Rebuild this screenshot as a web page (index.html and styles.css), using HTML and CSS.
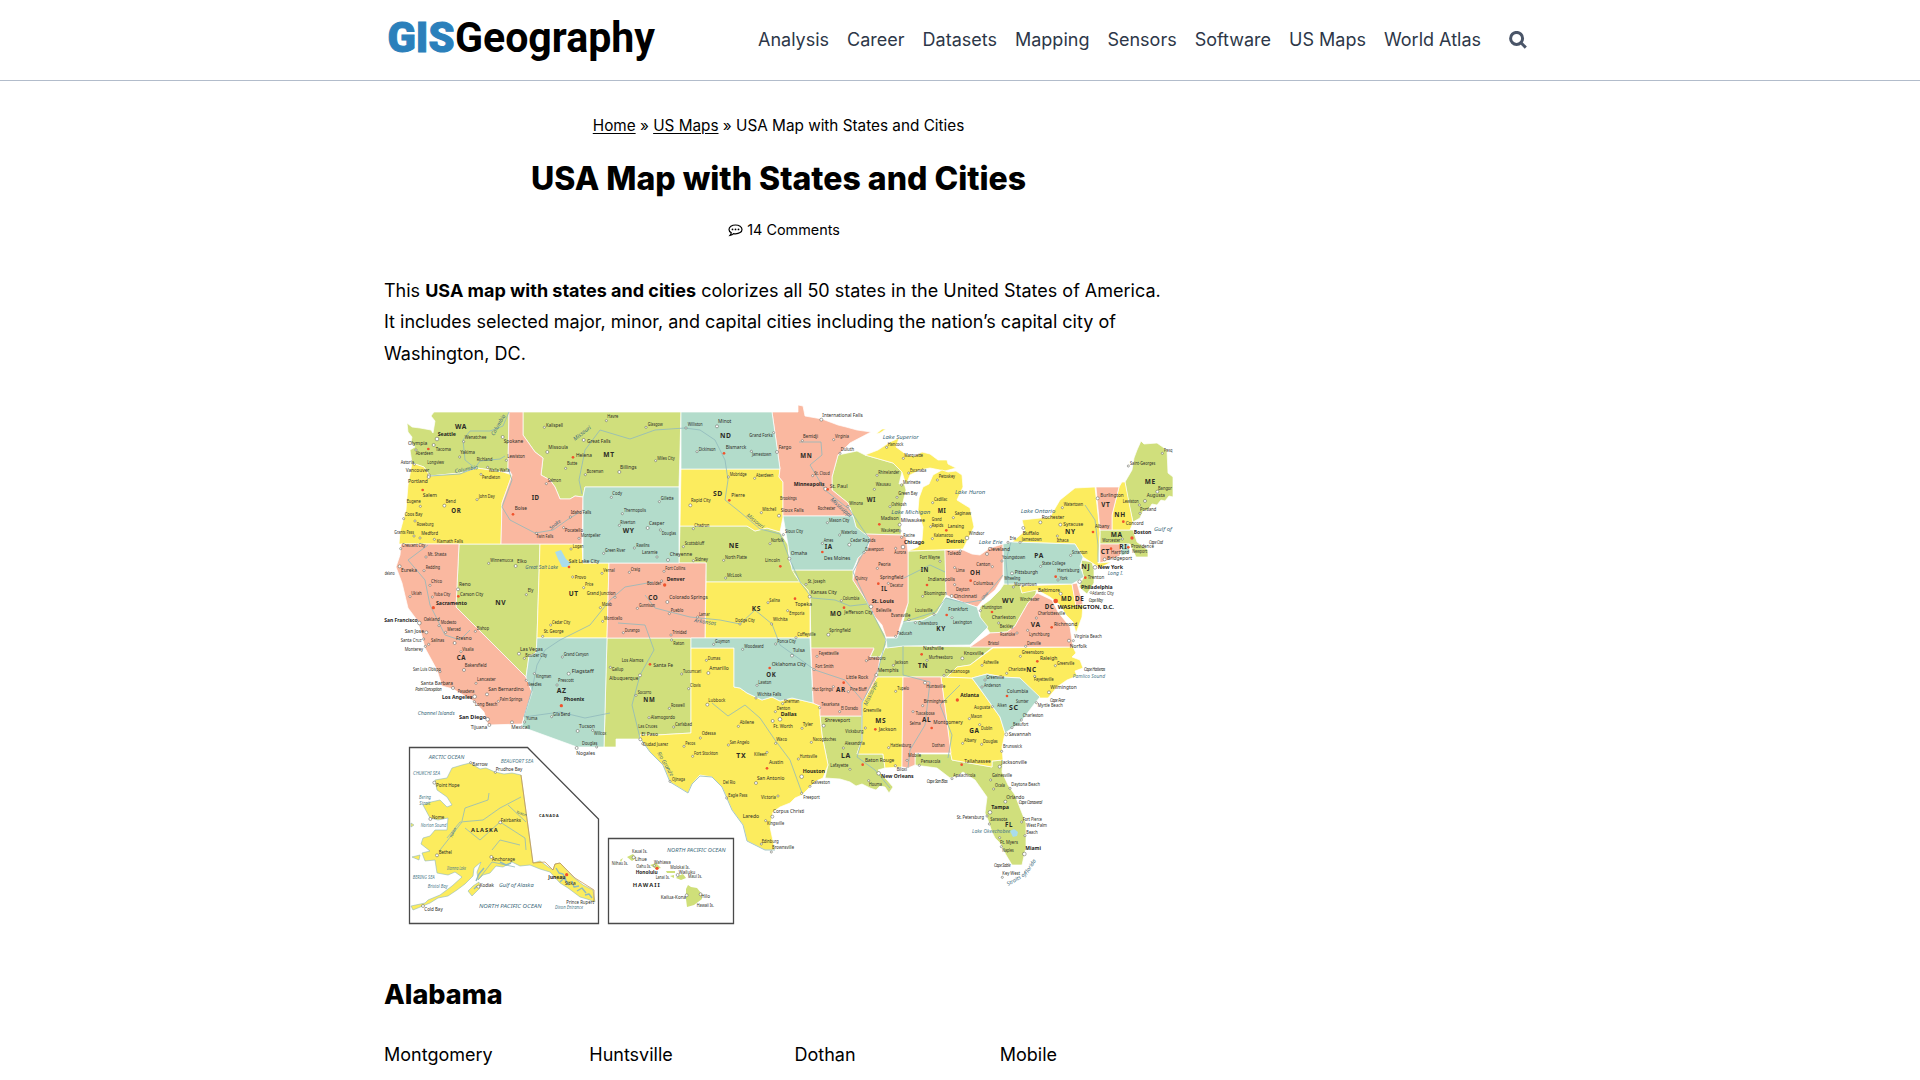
FILE: index.html
```html
<!DOCTYPE html>
<html lang="en">
<head>
<meta charset="utf-8">
<title>USA Map with States and Cities - GIS Geography</title>
<link rel="stylesheet" href="styles.css">
</head>
<body>
<header class="site-header">
  <div class="header-inner">
    <a class="logo" aria-label="GISGeography">
      <svg width="276" height="80" viewBox="0 0 276 80">
        <text class="logo-gis" x="3.500" y="52" textLength="67" lengthAdjust="spacingAndGlyphs">GIS</text>
        <text class="logo-geo" x="71" y="51.5" textLength="200" lengthAdjust="spacingAndGlyphs">Geography</text>
      </svg>
    </a>
    <nav class="nav">
      <a>Analysis</a><a>Career</a><a>Datasets</a><a>Mapping</a><a>Sensors</a><a>Software</a><a>US Maps</a><a>World Atlas</a>
    </nav>
    <svg class="search" width="18" height="18" viewBox="0 0 18 18"><circle cx="7.6" cy="7.4" r="6"/><path d="M12 11.800l4.800 4.800"/></svg>
  </div>
</header>
<main class="content">
  <article class="article">
    <div class="breadcrumb"><a>Home</a> » <a>US Maps</a> » USA Map with States and Cities</div>
    <h1>USA Map with States and Cities</h1>
    <div class="meta">
      <svg width="15" height="13" viewBox="0 0 15 13"><path d="M7.5 1C3.9 1 1 2.9 1 5.4c0 1.400.9 2.600 2.300 3.400-.1.900-.6 1.800-1.300 2.600 1.500-.2 2.700-.8 3.600-1.800.6.1 1.200.2 1.900.2 3.600 0 6.500-1.900 6.500-4.400S11.100 1 7.500 1z"/><circle cx="4.500" cy="5.400" r=".9"/><circle cx="7.500" cy="5.400" r=".9"/><circle cx="10.500" cy="5.400" r=".9"/></svg>
      <span>14 Comments</span>
    </div>
    <p class="intro">This <strong>USA map with states and cities</strong> colorizes all 50 states in the United States of America. It includes selected major, minor, and capital cities including the nation’s capital city of Washington, DC.</p>
    <svg class="map" width="789" height="530" viewBox="384 400 789 530">
      <g class="states">
        <g class="green">
          <path d="M407 423L412 427 420 428 431 430 433 433 435 421 431 416 434 412H509L508 470 503 472 477 468 460 473 440 475 430 476 424 467 412 463 410 450 415 447 411 442 412 437 408 432z"/>
          <path d="M523 412H681L679 487H585L583 497 575 496 570 499 560 499 555 487 550 480 541 475 543 458 535 452 523 435z"/>
          <path d="M459 544H540L537 638 536 653 529 656 526 677 456 607z"/>
          <path d="M607 638H691L691 733 657 735 640 735 640 739H616V747H604z"/>
          <path d="M680 526H747L755 531 767 528 780 532 788 545 789 560 795 575 800 582H706V563H679z"/>
          <path d="M792 570H853L853 580 867 602 875 617 885 635 886 645 880 657H870L874 649H811L810 598 800 582z"/>
          <path d="M832 477L838 455 857 451 865 455 893 463 902 472 899 484 904 483 906 490 901 510 901 535 863 534 856 527 853 516 848 503 832 490z"/>
          <path d="M908 551L945 550 946 595 937 613 923 620 903 622 908 603z"/>
          <path d="M885 648L903 646 993 647 970 665 957 667 947 677H877L880 660z"/>
          <path d="M820 716H862L862 740 857 754H883L885 768 878 770 884 777 887 780 893 787 889 793 885 787 880 786 876 790 870 788 862 784 856 786 850 782 840 779 825 778 828 765 822 735z"/>
          <path d="M915 754H951L952 760 992 767 992 761 1003 760 1002 772 1008 785 1015 795 1020 808 1026 823V847L1022 865 1012 865 1006 855 1000 843 995 838 992 832 988 820 985 813 987 797 975 780 963 772 957 776 950 778 937 768 915 765z"/>
          <path d="M1004 584H1020L1022 593 1037 588 1035 597 1028 603 1020 617 1015 626 1007 632 990 633 980 617 980 607 990 600 1000 590z"/>
          <path d="M1081 560L1092 562 1094 570 1094 583 1087 594 1079 587 1083 578z"/>
          <path d="M1100 530H1133L1137 542 1148 550 1148 557 1136 557 1130 544H1100z"/>
          <path d="M1125 482L1132 470 1134 458 1137 450 1141 441 1144 444 1157 443 1167 450 1168 473 1173 477V497L1169 496 1165 501 1161 500 1157 505 1152 504 1148 510 1143 511 1140 518 1133 522 1128 500z"/>
        </g>
        <g class="yellow">
          <path d="M412 463L424 467 430 476 440 475 460 473 477 468 503 472 512 475 502 503 501 544H399L400 532 406 510 408 485z"/>
          <path d="M540 544H582L583 563H609L607 638H537z"/>
          <path d="M681 469H780L779 477 783 482V517L780 532 767 528 755 531 747 526H680z"/>
          <path d="M706 582H800L808 590 810 598V638H705z"/>
          <path d="M691 648H734V687L740 688 747 693 762 700 772 697 780 701 792 698 813 703 820 706V716L822 735 828 765 823 778 816 781 810 787 802 795 795 798 790 803 780 807 773 812 770 827 775 850 765 850 747 841 743 825 732 810 722 787 712 777 700 775 692 784 688 793 670 782 663 765 650 752 640 738V735L657 735 691 733z"/>
          <path d="M865 455L878 450 890 442 899 438 896 447 907 455 915 456 922 452 930 454 938 460 947 460 948 464 956 468 945 471 930 468 920 470 910 475 906 485 902 472 893 463z"/>
          <path d="M876 434L882 429 886 429 880 433z"/>
          <path d="M942 470L948 472 956 471 962 475 963 487 957 500 965 505 970 508 974 527 970 535 963 549 908 551 918 547 922 540 923 527 918 510 919 498 923 487 929 484 933 475z"/>
          <path d="M877 677H903L902 767 885 768 883 754H857L862 740 862 703z"/>
          <path d="M941 677L972 678 983 693 1000 717 1005 733 1002 747 1003 760 992 761V767L952 760 950 750 948 730z"/>
          <path d="M993 648L1073 647 1076 653 1072 657 1080 660 1083 668 1075 671 1077 676 1067 680 1057 687 1048 698 1040 698 1020 678 1003 677 987 674 972 678 947 677 957 667 970 665z"/>
          <path d="M1020 586L1072 584 1076 605 1083 604 1082 617 1076 633 1073 622 1066 615 1060 605 1050 597 1037 590 1022 593z"/>
          <path d="M1012 542L1025 531 1022 520 1050 517 1060 500 1075 488 1095 487 1100 533 1098 563 1111 562 1100 568 1083 557 1075 544z"/>
          <path d="M1119 487L1122 482 1125 482 1133 523 1130 530H1112L1112 515z"/>
          <path class="alaska" d="M452 768L462 765 470 763 480 769 486 768 495 772 504 774 512 773 521 775 533 863 540 861 547 866 553 870 555 864 560 863 573 877 583 885 593 890 595 902 587 899 580 897 568 888 560 883 550 872 540 869 530 865 520 866 512 862 503 867 496 866 490 873 483 875 478 880 477 872 481 862 474 868 473 876 465 884 457 890 448 896 438 898 430 903 413 910 411 906 425 903 428 900 440 895 452 886 462 877 455 872 448 875 437 873 435 860 425 861 422 853 430 851 421 844 423 838 430 836 435 830 447 830 448 818 438 820 430 818 423 805 431 802 440 800 447 807 452 805 447 797 437 790 435 780 447 778z"/>
          <path class="alaska" d="M468 891L473 886 479 882 480 888 472 896zM412 857L420 855 419 860zM411 823l3 2-3 2z"/>
        </g>
        <g class="coral">
          <path d="M509 412H523V435L535 452 543 458 541 475 550 480 555 487 560 499 570 499 575 496 583 497 582 544H501L502 503 512 475 508 468z"/>
          <path d="M401 544H459L456 607 526 677 532 692 524 717 522 724 488 725 484 712 475 702 453 689 442 686 437 670 425 648 421 632 417 620 408 608 402 583 396 567 400 555z"/>
          <path d="M609 563H706L705 638H607z"/>
          <path d="M772 412H798V405L803 406 805 416 822 419 838 425 846 427 857 430 871 432 850 443 838 455 832 477V490L848 503 853 516H783V482L779 477 780 469z"/>
          <path d="M863 534L901 535 906 537 908 552V603L902 620 897 637H886L882 625 875 617 867 602 853 580 858 558 867 550 870 540z"/>
          <path d="M945 550H963L972 554 980 555 990 548 1003 544V577L995 590 983 600 977 607 962 602 946 595z"/>
          <path d="M811 648H874L870 657H880L877 677 862 703V716H820V706L813 703z"/>
          <path d="M903 677H941L948 730 951 753H915V765L908 768 902 767z"/>
          <path d="M970 647L990 633 1007 632 1015 626 1020 617 1028 603 1037 593 1052 600 1058 612 1070 627 1073 647z"/>
          <path d="M1072 584L1077 583 1083 604 1076 606z"/>
          <path d="M1096 487H1119L1112 515V530H1100z"/>
          <path d="M1100 544H1122L1120 556 1100 563z"/>
        </g>
        <g class="teal">
          <path d="M585 487H679V563H583V497z"/>
          <path d="M681 412H772L776 440 780 469H681z"/>
          <path d="M783 516H853L856 527 870 538 867 550 858 558 853 570H792L788 545z"/>
          <path d="M691 638H810L813 703 792 698 780 701 772 697 762 700 747 693 740 688 734 687V648H691z"/>
          <path d="M537 638H607L604 747H577L522 727 524 717 532 692 526 677 529 656 536 653z"/>
          <path d="M946 597L962 602 977 607 980 617 988 627 970 645 903 646 887 648 886 638H897L903 622 923 620 937 613z"/>
          <path d="M972 678L987 674 1003 677 1020 678 1040 697 1035 703 1020 723 1005 733 1000 717 983 693z"/>
          <path d="M1003 544L1012 542 1075 544 1083 557 1080 566 1084 577 1072 584H1004z"/>
          <path d="M1122 544H1129L1130 553 1121 556z"/>
        </g>
      </g>
      <g class="rivers">
        <path d="M430 476L460 474 475 468 480 461 500 459 505 456M475 468L465 460 463 440 470 431 490 431 503 426 509 412M508 468L512 480 502 507 510 520 535 533 553 530 567 520 583 510M582 494L579 480 585 450 600 430 630 439 655 430 685 428 700 430 715 440 725 460 728 480 725 500 740 512 760 529 780 534 790 560 800 582 812 598 835 600 850 606 867 604M653 582L625 587 610 600 590 625 560 640 545 650 537 665 532 690 524 717 560 712 585 718 610 713M618 623L645 625 654 650 640 675 632 705 640 738 650 752 663 765 670 782 688 793 692 784 700 776 712 777 722 787 732 810 743 825 747 841 765 850 775 850M645 595L655 608 690 617 720 620 740 624 755 610 772 624 780 645 815 670 845 680 862 700M712 703L728 716 745 705 760 718 775 740 790 760 802 793M799 442L821 442 822 455 810 465 825 490 850 510 870 540 853 572 867 602 886 640 878 670 862 703 862 740 857 757 875 770 890 788M903 622L935 612 946 598 965 603 982 600 1003 575M903 646L903 675 930 682 925 725 910 750 908 768M904 578L930 565 945 572M428 545L408 560 425 580 430 605 445 635 460 640 470 630M948 758L952 735 940 705 960 685M1011 542L1006 560 1008 585M1085 505L1095 520 1098 545 1098 562"/>
        <path d="M447 838L460 822 483 820 500 808 521 797M462 821L465 808 488 800 489 793M508 805L526 822M462 822L440 850M465 828L480 840 500 822 525 838 526 850M492 850L500 840 520 845M478 880L492 862 515 867"/>
        <path class="sounds" d="M556 868l3 5 4 1 3 6M560 882l4-4 5 7M572 881l2 6 5-1M577 891l5-3 4 5M585 895l4-1 3 4M484 868l-5 6-3 7M500 862l6 3 5-2M474 889l3-3"/>
      </g>
      <path class="lake" d="M555 552l6-2 5 9 5 4-4 4-5 0-4-8zM1010 831l4-2 4 3-1 4-4 1z"/>
      <path class="ak-border" d="M521 775L533 863 545 862 553 870 555 864 560 863 575 878 594 890V902"/>
      <path class="islands" d="M627 857l6-3 3 4-4 3zM620 860l3-2-2 4zM650 865l6-2 5 5-5 1zM666 871h9v2h-8zM678 876l5-2 3 4-5 2-5-2zM670 876l4-1v3zM686 889l2-4 3 2 6 1 4 5 1 6-8 6-7 2-1-8z"/>
      <path class="frame" d="M409.500 747.500H527.500L598.500 819V923.500H409.500zM608.500 838.500H733.500V923.500H608.500z"/>
      <g id="labels"></g>
    </svg>
    <h2>Alabama</h2>
    <div class="cities"><span>Montgomery</span><span>Huntsville</span><span>Dothan</span><span>Mobile</span></div>
  </article>
</main>
<script src="map.js"></script>
</body>
</html>
```

FILE: styles.css
```css
* { box-sizing: border-box; }
body { margin: 0; height: 1080px; overflow: hidden; background: #fff; color: #000; font-family: Inter, "Liberation Sans", sans-serif; font-size: 18px; line-height: 31.4px; }
.site-header { height: 81px; border-bottom: 1px solid #b2bccb; }
.header-inner { width: 1152px; height: 80px; margin: 0 auto; display: flex; align-items: center; }
.logo { display: flex; margin-right: auto; }
.logo-gis { font: 900 42.5px Roboto, sans-serif; fill: #2b80bb; stroke: #2b80bb; stroke-width: 1; }
.logo-geo { font: 700 42px Roboto, sans-serif; fill: #000; }
.nav { display: flex; gap: 18px; color: #2d3748; }
.search { margin: 0 9px 0 28px; fill: none; stroke: #4a5568; stroke-width: 3; }
.content { width: 1152px; margin: 0 auto; }
.article { width: 789px; padding-top: 32px; }
.breadcrumb { text-align: center; font-size: 15.300px; line-height: 26px; }
.breadcrumb a { text-decoration: underline; text-underline-offset: 2px; }
h1 { margin: 18px 0 0; text-align: center; font-size: 32px; font-weight: 800; line-height: 44px; }
.meta { display: flex; justify-content: center; align-items: center; gap: 4px; margin-top: 17px; padding-left: 11px; height: 24px; font-size: 14.400px; line-height: 24px; }
.meta path { fill: none; stroke: #000; stroke-width: 1.200; }
.intro { margin: 33px 0 0; height: 95px; }
.map { display: block; margin-top: 30px; }
h2 { margin: 44px 0 0; font-size: 27px; font-weight: 800; line-height: 42px; }
.cities { display: grid; grid-template-columns: repeat(4, 1fr); column-gap: 32px; margin-top: 23px; }

.states path { stroke: #fff; stroke-opacity: .7; stroke-width: 1; stroke-linejoin: round; }
.states .alaska { stroke: #8fb9bd; stroke-opacity: 1; stroke-width: .6; }
.green { fill: #d0df7c; }
.yellow { fill: #fcec5e; }
.coral { fill: #fab8a0; }
.teal { fill: #b3dccb; }
.rivers { fill: none; stroke: #8fb9bd; stroke-width: .8; stroke-linejoin: round; }
.rivers .sounds { stroke-width: 1.400; }
.lake { fill: #a9dcec; }
.islands { fill: #cfdf79; }
.ak-border { fill: none; stroke: #c98e3c; stroke-width: .7; }
.frame { fill: none; stroke: #4a4a4a; stroke-width: 1.300; }
#labels { font-family: "Noto Sans", sans-serif; fill: #2b2b26; }
.s { font-size: 14px; }
.m { font-size: 16.500px; }
.b { font-size: 17px; font-weight: 700; fill: #1d1d1d; }
.st { font-size: 21px; font-weight: 700; letter-spacing: 2px; }
.ak { font-size: 17px; font-weight: 700; letter-spacing: 3px; }
.ca { font-size: 12px; font-weight: 700; letter-spacing: 2px; }
.w { font-size: 18px; font-style: italic; fill: #406b7c; }
.ws { font-size: 14px; font-style: italic; fill: #4f7c8c; }
.c { font-size: 14px; font-style: italic; letter-spacing: -1px; }
.dot { fill: #fff; stroke: #55584f; stroke-width: 1.500; }
.cap { fill: #f0532d; }
```

FILE: map.js
```js
// Labels are grouped in regional sheets drawn at three units per map pixel.
// Row: class, text, left, middle, width [, dot x, dot y [, capital]]
const sheets = [
  [380, 400, `
st|WA|225|79|36
b|Seattle|173|102|55|171|117
m|Olympia|84|131|58|145|147|1
m|Tacoma|167|147|46|161|135
s|Aberdeen|107|161|52|108|150
s|Wenatchee|254|111|65|251|125
s|Yakima|241|158|44|239|171
s|Richland|290|179|47
s|Longview|142|188|50
s|Astoria|62|187|40|103|193
m|Spokane|371|125|59|368|111
s|Lewiston|382|168|53|379|181
m|Vancouver|77|211|71|147|226
s|Walla Walla|326|211|63|323|202
s|Pendleton|306|233|54|303|223
m|Portland|84|243|59|146|231
m|Salem|128|285|43|128|270|1
s|Eugene|80|305|42|121|319
m|Bend|197|303|30|193|317
s|John Day|296|289|48|291|299
st|OR|214|331|30
s|Coos Bay|74|343|53|71|356
s|Roseburg|110|372|51|105|363
s|Grants Pass|43|397|59|102|408
s|Medford|124|401|50|120|414
s|Klamath Falls|170|424|79|163|418
s|Crescent City|66|436|70|62|446
st|ID|455|292|24
m|Boise|404|326|37|399|343|1
s|Idaho Falls|572|337|62|571|351
s|Pocatello|554|391|55|551|383
s|Twin Falls|469|410|51|469|400
s|Salmon|503|242|40|499|251
s|Kalispell|498|76|51|493|82
m|Missoula|505|141|59|502|156
m|Helena|588|165|48|579|172|1
s|Butte|561|191|31|557|205
s|Montpelier|602|405|60|597|415
s|Mt. Shasta|143|462|56|138|471
s|Redding|137|503|43|132|512
m|Eureka|63|512|48|59|499
s|Winnemucca|331|481|68|326|490
m|Elko|411|483|29|407|498
s|Logan|578|438|33|573|447
m|Salt Lake City|566|483|92|567|501|1
s|Provo|584|532|34|578|531
w|Great Salt Lake|436|503|98
s|delano|14|521|30
`],
  [580, 400, `
s|Havre|82|48|33|79|62
s|Glasgow|203|73|45|198|82
m|Great Falls|21|124|71|11|120
st|MT|70|165|34
m|Billings|120|202|50|118|216
s|Miles City|232|174|52|227|182
s|Bozeman|20|214|50|16|224
s|Williston|323|74|45|318|84
m|Minot|414|65|40|411|79
st|ND|420|108|35
s|Grand Forks|508|107|70|581|98
m|Bismarck|437|142|62|432|160|1
s|Dickinson|356|147|51|351|155
s|Jamestown|516|164|58|514|154
s|Mobridge|449|223|51|445|231
s|Aberdeen|528|226|52|524|235
st|SD|399|281|30
m|Pierre|454|287|41|448|301|1
m|Rapid City|333|302|59|331|316
s|Mitchell|547|328|42|544|338
s|Cody|97|279|29|94|292
s|Gillette|242|296|39|238|305
s|Thermopolis|132|331|66|127|341
s|Riverton|121|367|45|118|376
m|Casper|207|370|46|203|384
st|WY|128|391|36
s|Douglas|245|399|43|241|390
s|Rawlins|169|435|40|163|444
s|Green River|75|450|61|71|460
s|Laramie|186|457|47|231|471
m|Cheyenne|269|463|68|264|480
s|Chadron|343|377|45|340|386
s|Scottsbluff|314|431|59|310|440
s|Sidney|345|477|39|340|482
st|NE|446|438|32
s|North Platte|435|471|66|431|481
m|Lincoln|555|482|45|601|499|1
s|Norfolk|573|422|38|570|431
s|Vernal|70|511|34|66|520
s|Craig|152|508|28|148|517
s|Fort Collins|256|505|60|252|514
`],
  [780, 400, `
m|International Falls|127|45|121|124|59
s|Bemidji|69|108|45|67|122
s|Virginia|165|110|42|161|119
m|Fargo|-4|141|38|-9|156
st|MN|61|168|36
s|Duluth|182|148|40|180|160
s|St. Cloud|103|220|46|98|227
b|Minneapolis|41|252|93|137|267
m|St. Paul|149|258|54|143|268|1
s|Rochester|113|326|53
m|Sioux Falls|2|331|69|-3|347
s|Brookings|0|296|50
w|Lake Superior|308|113|108
s|Hancock|323|133|47|320|142
s|Marquette|373|165|56|370|175
s|Escanaba|390|211|49|386|219
s|Rhinelander|295|216|63|291|226
s|Wausau|287|254|45|283|268
s|Marinette|369|246|52|365|255
s|Green Bay|355|279|58|351|292
st|WI|260|298|28
s|Oshkosh|334|312|46|330|320
s|Winona|208|310|41|204|319
m|Madison|302|356|54|298|373|1
m|Milwaukee|362|360|73|359|374
s|Waukegan|303|392|55|360|393
s|Racine|370|405|35|365|412
b|Chicago|372|428|61|369|441
s|Petoskey|476|230|49|472|240
s|Cadillac|462|299|40|458|308
st|MI|473|331|26
s|Saginaw|524|341|49|520|353
s|Grand|455|357|30
s|Rapids|455|375|35|452|380
m|Lansing|503|379|49|499|391|1
s|Kalamazoo|461|407|58|457|416
b|Detroit|499|423|54|561|414
m|Windsor|566|401|47
w|Lake Michigan|334|338|117
w|Lake Huron|525|277|91
s|Mason City|147|362|61|142|368
s|Waterloo|183|398|48|179|405
s|Ames|131|421|29|127|430
m|Cedar Rapids|211|421|75|208|434
st|IA|134|440|24
m|Des Moines|132|474|79|127|456|1
s|Sioux City|15|394|54|10|404
m|Omaha|32|461|50|28|476
s|Davenport|256|448|55|252|457
s|Peoria|295|492|37|292|505
s|Aurora|343|458|35|347|445
s|Toledo|502|460|41|541|453
s|Fort Wayne|419|471|61|480|484
st|IN|422|510|25
s|Lima|528|511|26|524|503
st|OH|570|517|32
`],
  [970, 400, `
s|Saint-Georges|480|189|76|475|198
s|Presq|582|152|25|577|160
st|ME|524|244|33
m|Bangor|564|264|42|562|275
m|Augusta|530|287|55|525|303
s|Lewiston|458|305|48|508|315
s|Portland|510|328|49|510|340
m|Burlington|391|287|70|383|295
st|VT|394|313|27
st|NH|433|344|34
s|Concord|467|370|54|460|365|1
s|Watertown|281|314|58|277|323
w|Lake Ontario|152|334|104
m|Rochester|215|353|68|211|367
m|Syracuse|280|373|60|271|374
st|NY|285|394|32
m|Buffalo|158|400|49|160|384
s|Jamestown|155|418|60|150|427
s|Ithaca|260|422|36|262|408
s|Albany|375|380|43|369|396|1
w|Lake Erie|26|426|72
s|Erie|119|416|19|114|427
m|Cleveland|54|448|66|51|462
s|Youngstown|96|471|70|96|483
s|Canton|19|492|42|67|500
st|PA|193|468|29
s|Scranton|306|457|46|302|466
s|State College|216|491|70|212|499
m|Pittsburgh|134|516|70|126|520
m|Harrisburg|262|512|66|257|530|1
st|MA|422|403|36
s|Worcester|397|420|54|457|417
b|Boston|491|396|53|486|414|1
w|Gulf of|552|387|54
c|Cape Cod|537|426|41
st|RI|448|440|24
m|Providence|483|438|69|475|442|1
s|Newport|487|455|44
st|CT|392|456|28
s|Hartford|423|457|54|423|446|1
m|Bridgeport|411|476|75|404|478
b|New York|383|501|76|375|502
st|NJ|334|499|27
w|Long I.|413|520|47
m|Trenton|353|532|50|346|533|1
`],
  [380, 570, `
s|Chico|153|34|33|150|46
s|Ukiah|94|71|31|90|80
s|Yuba City|161|72|50|157|81
m|Reno|237|43|35|234|58
m|Carson City|240|73|70|235|79|1
b|Sacramento|168|100|93|160|113|1
s|Ely|443|61|17|439|74
st|NV|346|97|33
b|San Francisco|13|150|100|118|159
s|Oakland|131|149|48
s|Modesto|182|158|47|177|167
s|Merced|202|177|40|197|187
m|San Jose|74|185|58|139|187
s|Santa Cruz|62|210|63|131|207
s|Salinas|153|211|40|146|223
m|Fresno|228|204|47|224|219
s|Monterey|74|237|55|136|229
s|Visalia|247|237|34|243|245
st|CA|230|263|28
s|Bishop|290|175|37|286|184
m|Las Vegas|420|237|69|417|251
s|Boulder City|436|257|65|433|265
m|Bakersfield|254|286|66|252|300
s|San Luis Obispo|99|297|83|180|305
s|Lancaster|291|327|56|288|340
m|Santa Barbara|122|340|97|219|354
c|Point Conception|106|359|78
s|Pasadena|233|364|50
m|San Bernardino|325|358|106|321|373
b|Los Angeles|186|382|91|284|380
s|Palm Springs|359|387|68|355|394
s|Long Beach|285|403|67|283|395
w|Channel Islands|113|431|111
b|San Diego|237|441|82|323|448
m|Tijuana|272|472|50|328|465
m|Mexicali|394|473|56|396|457
s|Yuma|438|444|34|434|456
s|Needles|442|342|43|439|331
s|Kingman|468|320|46|463|311
s|Grand Canyon|551|252|75|547|261
m|Flagstaff|575|304|66|566|311
s|Prescott|534|332|47|531|345
st|AZ|530|363|30
b|Phoenix|551|389|62|544|407|1
s|Gila Bend|519|432|51|515|440
m|Tucson|597|469|48|593|483
s|Cedar City|516|156|55|512|165
s|St. George|491|185|60|488|199
st|UT|566|70|30
`],
  [580, 570, `
s|Price|15|44|25|11|53
s|Grand Junction|20|69|87|105|82
s|Moab|65|104|31|61|113
s|Monticello|72|145|55|68|154
s|Boulder|201|41|43|245|33
b|Denver|260|28|54|254|45|1
st|CO|205|82|30
m|Colorado Springs|268|82|115|262|96
s|Gunnison|177|106|48|172|115
s|Pueblo|272|121|38|268|131
s|Lamar|357|132|32|353|141
s|Durango|134|180|45|130|188
s|Trinidad|277|187|43|273|195
s|Raton|280|219|33|275|210
s|McLook|441|15|44|437|24
s|Salina|568|91|32|564|98
st|KS|515|117|28
s|Dodge City|466|151|58|480|162
s|Wichita|579|149|44|575|162
s|Guymon|405|215|44|401|223
s|Woodward|493|229|58|488|238
s|Ponca City|592|214|55|587|222
m|Oklahoma City|575|284|102|569|294|1
st|OK|559|313|30
s|Lawton|535|338|39|531|346
s|Wichita Falls|532|372|72|528|384
s|Dumas|383|264|38|379|271
m|Amarillo|388|295|58|385|309
s|Los Alamos|125|272|65
m|Santa Fe|220|286|59|210|283|1
s|Tucumcari|309|303|55|305|312
s|Gallup|95|298|35|91|292
m|Albuquerque|88|324|87|180|316
s|Clovis|330|347|32|326|356
s|Socorro|173|367|41|168|376
st|NM|190|390|36
s|Roswell|273|407|41|268|415
s|Alamogordo|212|443|73|207|443
s|Las Cruces|175|468|57
s|Carlsbad|285|463|51|281|471
m|El Paso|184|493|50|181|508
s|Ciudad Juarez|188|523|76|188|521
m|Lubbock|385|391|51|382|404
s|Abilene|479|456|43|475|469
s|Odessa|365|490|42|361|504
s|San Angelo|449|517|59|445|525
s|Pecos|316|520|30|312|529
b|Dallas|602|433|48|600|448
m|Ft. Worth|580|469|58|578|453
s|Waco|589|507|32|587|520
s|Sherman|612|393|46|608|401
s|Denton|590|416|40|586|425
s|Willcox|42|490|37|38|481
s|Douglas|6|519|46|50|531
`],
  [780, 570, `
s|St. Joseph|83|35|53|78|43
m|Kansas City|92|67|78|89|80
m|Topeka|45|102|51|45|86|1
s|Emporia|28|131|45|23|122
s|Columbia|188|84|50|184|92
st|MO|150|130|36
m|Jefferson City|193|127|85|192|113|1
m|Springfield|148|181|64|145|194
s|Coffeyville|52|194|55|48|203
s|Quincy|226|26|36
m|Springfield|300|23|70|295|41|1
s|Decatur|330|47|40|325|40
st|IL|304|57|19
b|St. Louis|275|93|67|273|110
s|Belleville|288|120|46
s|Evansville|333|135|58|387|149
m|Indianapolis|444|28|81|441|45|1
s|Bloomington|432|70|68|428|79
m|Cincinnati|521|78|70|515|78
s|Dayton|528|57|40|524|44
m|Columbus|580|40|60|572|32|1
s|Louisville|405|121|53|462|133
m|Frankfort|505|118|59|500|135|1
s|Lexington|519|157|57|516|143
s|Owensboro|415|159|58|406|158
st|KY|469|176|29
s|Paducah|351|190|45|347|199
m|Tulsa|38|242|37|36|257
s|Fayetteville|116|250|60|111|259
s|Jonesboro|263|264|54|259|272
s|Jackson|344|277|40|340|286
m|Memphis|293|300|63|289|315
m|Nashville|429|236|62|425|253|1
s|Murfreesboro|446|263|72|441|271
m|Knoxville|551|250|60|547|265
st|TN|414|288|30
s|Chattanooga|495|303|74|492|316
s|Fort Smith|106|290|55|102|299
m|Little Rock|198|323|67|191|338|1
s|Hot Springs|97|357|61|160|350
st|AR|168|359|29
s|Pine Bluff|210|357|50|205|365
s|Texarkana|124|404|54|119|413
s|El Dorado|183|416|51|179|425
s|Greenville|250|421|53
s|Tupelo|352|355|35|347|364
m|Huntsville|439|350|57|435|338
s|Birmingham|431|393|70|428|407
s|Tuscaloosa|407|431|57|399|425
s|Selma|389|460|33
st|AL|426|449|28
m|Montgomery|460|457|88|455|474|1
b|Atlanta|541|375|56|532|390|1
s|Macon|572|438|34|568|446
st|GA|568|481|31
s|Albany|552|511|37|548|520
s|Dothan|456|526|38
s|Tyler|68|462|31|66|475
m|Shreveport|134|452|76|131|467
s|Vicksburg|196|485|54|256|474
st|MS|286|452|33
m|Jackson|296|478|53|286|478|1
s|Nacogdoches|98|508|70|94|517
s|Alexandria|194|521|60|190|534
s|Hattiesburg|331|525|62|326|533
`],
  [970, 550, `
s|Wheeling|103|84|48
s|Morgantown|133|102|67|130|111
s|York|269|84|24|264|90
m|Baltimore|204|120|66|272|131
b|Philadelphia|333|112|95|329|95
s|Atlantic City|367|131|64|363|128
st|MD|273|145|34
st|DE|315|145|28
c|Cape May|356|152|42
st|DC|224|169|29
b|WASHINGTON, D.C.|263|171|169
cap|||||257|153|1
st|WV|96|152|37
s|Winchester|150|147|58
s|Huntington|36|173|60|31|182
m|Charleston|65|202|72|66|186|1
s|Beckley|89|228|41|86|219
s|Charlottesville|203|190|82|199|204
st|VA|182|223|30
m|Richmond|252|222|70|245|232|1
s|Lynchburg|177|254|62|173|241
s|Roanoke|90|254|45|141|249
s|Danville|171|280|42|167|289
s|Bristol|54|279|33
s|Virginia Beach|313|260|82|310|272
m|Norfolk|299|289|52|297|272
s|Greensboro|155|306|66|151|319
m|Raleigh|210|325|52|202|334|1
s|Greenville|261|339|52|256|347
s|Asheville|40|337|46|36|346
s|Charlotte|115|357|52|110|370
st|NC|169|359|31
s|Fayetteville|192|389|59|194|379
c|Cape Hatteras|342|358|63
ws|Pamlico Sound|308|378|97
m|Wilmington|241|412|79|237|427
c|Cape Fear|240|452|44
s|Myrtle Beach|203|467|75|199|458
s|Greenville|49|381|53|45|390
s|Anderson|42|405|50|36|411
m|Columbia|110|423|65|111|438|1
s|Sumter|138|454|38
s|Aiken|82|466|28
s|Augusta|12|471|48|67|470
st|SC|117|473|29
s|Charleston|158|496|62|154|510
s|Beaufort|129|522|46|126|533
m|Savannah|116|554|67|109|553
s|Dublin|33|535|34|29|524
s|Douglas|39|575|44|35|583
`],
  [380, 740, `
w|ARCTIC OCEAN|146|52|107
ws|BEAUFORT SEA|362|64|98
ws|CHUKCHI SEA|99|100|81
s|Barrow|277|73|46|272|68
s|Prudhoe Bay|347|88|80|346|97
m|Point Hope|168|136|71|163|128
ws|Bering|117|173|36
ws|Strait|118|189|33
m|Nome|155|232|38|151|237
ws|Norton Sound|122|257|77
m|Fairbanks|362|240|61|361|247
ak|ALASKA|273|270|83
ca|CANADA|477|225|61
m|Bethel|176|338|40|171|346
m|Anchorage|336|358|69|334|351
ws|Iliamna Lake|201|384|57
ws|BERING SEA|98|413|66
ws|Bristol Bay|143|440|60
m|Kodiak|299|436|43|295|440
w|Gulf of Alaska|357|437|104
b|Juneau|505|412|51|560|404|1
s|Sitka|554|431|33
w|NORTH PACIFIC OCEAN|297|500|188
s|Prince Rupert|559|487|83
ws|Dixon Entrance|525|501|84
m|Cold Bay|133|507|55|129|498
m|Nogales|589|39|56|590|24
s|Ojinaga|876|118|39|870|124
s|Del Rio|1029|127|37
s|Eagle Pass|1045|165|57|1040|174
s|Fort Stockton|942|39|72|938|49
st|TX|1069|47|30
s|Killeen|1122|42|37|1161|37
m|Austin|1167|67|43|1161|85|1
m|San Antonio|1131|114|82|1128|129
s|Victoria|1143|172|45|1194|168
m|Laredo|1088|229|49
m|Corpus Christi|1179|215|94|1177|230
s|Kingsville|1161|250|52|1157|242
s|Edinburg|1145|303|51|1144|312
s|Brownsville|1176|321|66|1174|336
w|NORTH PACIFIC OCEAN|861|331|176
s|Kauai Is.|756|334|46
m|Lihue|765|357|36|761|352
s|Niihau Is.|695|369|49
s|Oahu Is.|769|379|44
s|Wahiawa|822|367|50|823|377
b|Honolulu|767|397|66|831|385|1
s|Molokai Is.|871|382|58
m|Wailuku|896|398|50|893|405
s|Lanai Is.|827|412|42
s|Maui Is.|924|410|42
ak|HAWAII|758|437|84
m|Kailua-Kona|842|472|76|920|466
m|Hilo|964|470|26|962|463
s|Hawaii Is.|950|496|52
`],
  [770, 740, `
s|Brunswick|699|20|57|695|34
s|Huntsville|89|49|52|85|57
b|Houston|98|95|67|95|110
s|Galveston|123|126|57|120|139
s|Freeport|100|173|49|95|160
st|LA|213|47|30
s|Lafayette|181|76|54|240|88
m|Baton Rouge|285|62|88|278|74|1
b|New Orleans|333|110|98|326|100
s|Houma|297|134|39|296|122
s|Biloxi|380|89|31|376|77
s|Mobile|414|47|39|411|61
s|Pensacola|452|65|59|448|76
m|Tallahassee|583|63|79|575|74|1
s|Apalachicola|550|107|66|546|116
c|Cape San Blas|470|124|62
m|Jacksonville|694|66|77|689|80
s|Gainesville|666|107|60|662|120
s|Ocala|675|137|30|671|147
s|Daytona Beach|724|132|86|720|145
m|Orlando|709|171|54|706|185
c|Cape Canaveral|746|188|70
b|Tampa|664|203|53|660|217
s|St. Petersburg|560|231|82|651|228
s|Sarasota|661|238|51|658|252
s|Fort Pierce|758|237|58|755|246
st|FL|705|254|24
ws|Lake Okeechobee|606|273|115
s|West Palm|769|257|62
s|Beach|769|277|34|765|287
s|Ft. Myers|690|306|54|689|293
s|Naples|697|331|34|694|320
b|Miami|766|326|47|763|342
c|Cape Sable|672|377|49
s|Key West|697|401|53|697|412
`]
];

// Labels that follow a slanted river or strait: text, x, y, angle, size
const slanted = [
  ["Columbia", 494, 436, -60, 5.5], ["Columbia", 455, 473, -10, 5.5],
  ["Missouri", 575, 441, -38, 5.5], ["Snake", 551, 530, -40, 5],
  ["Missouri", 746, 516, 38, 5.5], ["Mississippi", 830, 500, 42, 5.5],
  ["Arkansas", 694, 622, 9, 5.5], ["Mississippi", 867, 706, -66, 5.5],
  ["Rio Grande", 657, 753, 60, 5.5], ["Straits of", 1008, 886, -30, 5.5],
  ["Florida", 1027, 875, -58, 5.5], ["Ohio", 983, 600, -50, 4],
  ["Yukon", 452, 838, -65, 4], ["Yukon", 516, 813, 20, 4]
];

const out = [];
for (const [ox, oy, rows] of sheets) {
  out.push(`<g transform="translate(${ox} ${oy}) scale(.33333)">`);
  for (const row of rows.trim().split("\n")) {
    const [cls, text, x, y, w, dx, dy, cap] = row.split("|");
    if (dx) {
      const r = cap ? (cls === "b" ? 5 : cls === "cap" ? 7 : 4) : cls === "b" ? 5.5 : cls === "m" ? 4.5 : 3.2;
      out.push(`<circle class="${cap ? "cap" : "dot"}" cx="${dx}" cy="${dy}" r="${r}"/>`);
    }
    if (!text) continue;
    const drop = cls === "st" ? 7 : 5;
    out.push(`<text class="${cls}" x="${x}" y="${+y + drop}" textLength="${w}" lengthAdjust="spacingAndGlyphs">${text}</text>`);
  }
  out.push("</g>");
}
for (const [text, x, y, angle, size] of slanted) {
  out.push(`<text class="w" style="font-size:${size}px" transform="translate(${x} ${y}) rotate(${angle})">${text}</text>`);
}
document.getElementById("labels").innerHTML = out.join("");
```
